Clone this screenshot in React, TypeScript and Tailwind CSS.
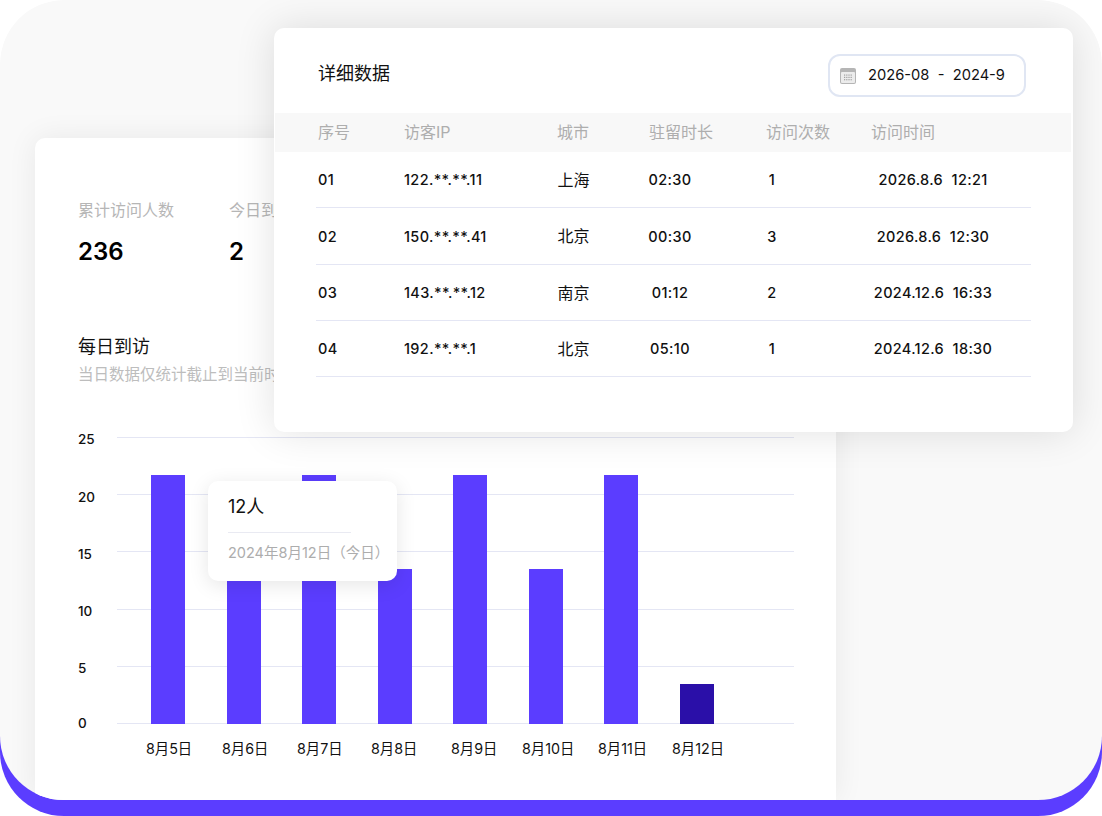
const FONT = "font-['Inter','Noto_Sans_CJK_SC',sans-serif]";

const rows = [
  ["01", "122.**.**.11", "上海", "02:30", "1", "2026.8.6  12:21"],
  ["02", "150.**.**.41", "北京", "00:30", "3", "2026.8.6  12:30"],
  ["03", "143.**.**.12", "南京", "01:12", "2", "2024.12.6  16:33"],
  ["04", "192.**.**.1", "北京", "05:10", "1", "2024.12.6  18:30"],
];
const heads = ["序号", "访客IP", "城市", "驻留时长", "访问次数", "访问时间"];
const yTicks = ["25", "20", "15", "10", "5", "0"];
const bars = [
  { label: "8月5日", h: 249 },
  { label: "8月6日", h: 200 },
  { label: "8月7日", h: 249 },
  { label: "8月8日", h: 155 },
  { label: "8月9日", h: 249 },
  { label: "8月10日", h: 155 },
  { label: "8月11日", h: 249 },
  { label: "8月12日", h: 40, today: true },
];
const rowGrid = "grid grid-cols-[86px_153.5px_80.5px_64px_140px_182px]";

function CalendarIcon() {
  return (
    <svg width="16" height="16" viewBox="0 0 16 16" className="shrink-0">
      <rect x="0" y="0" width="16" height="16" rx="2" fill="#b5b5b5" />
      <rect x="1" y="4" width="14" height="11" rx="1" fill="#ececec" />
      {[6.5, 8.8, 11.1].map((y) =>
        [4, 6.2, 8.4, 10.6].map((x) => <rect key={`${x}-${y}`} x={x} y={y} width="1.2" height="1.2" fill="#a0a0a0" />)
      )}
    </svg>
  );
}

export default function App() {
  return (
    <div className={`relative h-[816px] w-[1102px] overflow-hidden rounded-[64px] bg-[linear-gradient(transparent_50%,#5b3dff_50%)] ${FONT}`}>
      <div className="h-[800px] overflow-hidden rounded-[64px] bg-[#f9f9f9] pl-[35px] pt-[138px]">
        <div className="h-[662px] w-[801px] rounded-t-[10px] bg-white pl-[43px] pt-[61px] shadow-[0_0_30px_rgba(0,0,0,0.07)]">
          <div className="flex">
            <div className="w-[151px]">
              <div className="text-[16px] leading-[22px] text-[#b6b6b6]">累计访问人数</div>
              <div className="mt-[16px] text-[24px] leading-[30px] font-semibold text-black">236</div>
            </div>
            <div>
              <div className="text-[16px] leading-[22px] text-[#b6b6b6]">今日到访人数</div>
              <div className="mt-[16px] text-[24px] leading-[30px] font-semibold text-black">2</div>
            </div>
          </div>
          <div className="mt-[68px] text-[18px] leading-[24px] font-normal text-[#111]">每日到访</div>
          <div className="mt-[6px] text-[15.5px] leading-[20px] text-[#bdbdbd]">当日数据仅统计截止到当前时间</div>

          <div className="relative mt-[52px] h-[287px] w-[716px]">
            <div className="flex h-full flex-col justify-between">
              {yTicks.map((t) => (
                <div key={t} className="flex h-[1px] items-center">
                  <span className={`w-[39px] text-[13.5px] font-[450] text-[#111] ${t === "0" ? "pt-0" : "pt-[4px]"}`}>{t}</span>
                  <div className="h-[1px] w-[677px] bg-[#e4e6f4]" />
                </div>
              ))}
            </div>
            <div className="absolute bottom-0 left-[73px] flex items-end gap-[41.5px]">
              {bars.map((b) => (
                <div
                  key={b.label}
                  className={`w-[34px] ${b.today ? "bg-[#2a0fa8]" : "bg-[#5b3dff]"}`}
                  style={{ height: b.h }}
                />
              ))}
            </div>
            <div className="absolute left-[130px] top-[44px] h-[100px] w-[189px] rounded-[10px] bg-white px-[20px] pt-[12px] shadow-[0_4px_20px_rgba(0,0,0,0.1)]">
              <div className="text-[18px] leading-[28px] font-normal text-[#111]">12人</div>
              <div className="mt-[11px] h-[1px] w-[123px] bg-[#e9eaf2]" />
              <div className="mt-[9px] whitespace-nowrap text-[14.5px] leading-[22px] text-[#adadad]">2024年8月12日（今日）</div>
            </div>
          </div>
          <div className="mt-[14px] flex w-[716px] items-start pl-[68px] text-[14.3px] leading-[22px] text-[#111]">
            <span className="w-[76px]">8月5日</span>
            <span className="w-[75px]">8月6日</span>
            <span className="w-[74px]">8月7日</span>
            <span className="w-[80px]">8月8日</span>
            <span className="w-[71px]">8月9日</span>
            <span className="w-[76px]">8月10日</span>
            <span className="w-[74px]">8月11日</span>
            <span>8月12日</span>
          </div>
        </div>
      </div>

      <div className="absolute left-[274px] top-[28px] h-[404px] w-[799px] rounded-[10px] bg-white shadow-[0_0_40px_rgba(0,0,0,0.12)]">
        <div className="flex h-[85px] items-start justify-between pl-[44px] pr-[47px]">
          <div className="pt-[33px] text-[18px] leading-[26px] font-normal text-[#111]">详细数据</div>
          <div className="mt-[26px] flex h-[43px] w-[198px] items-center gap-[12px] rounded-[12px] border-2 border-[#e0e6f3] pl-[10px] text-[14.7px] text-[#111]">
            <CalendarIcon />
            <span className="whitespace-pre">2026-08  -  2024-9</span>
          </div>
        </div>
        <div className="ml-[1px] grid h-[39px] w-[796px] grid-cols-[86px_153px_92px_117px_105px_1fr] items-center bg-[#f8f8f8] pb-[2px] pl-[43px] text-[16px] text-[#aeaeae]">
          {heads.map((h) => (
            <span key={h}>{h}</span>
          ))}
        </div>
        <div className="ml-[42px] w-[715px]">
          {rows.map((r) => (
            <div key={r[0]} className={`${rowGrid} h-[56.3px] items-center border-b border-[#e4e6f4] pl-[2px] pt-[1px] text-[14.5px] font-[450] tracking-[0.35px] text-[#111]`}>
              <span>{r[0]}</span>
              <span>{r[1]}</span>
              <span className="text-[16px] font-normal tracking-normal">{r[2]}</span>
              <span className="text-center">{r[3]}</span>
              <span className="text-center">{r[4]}</span>
              <span className="whitespace-pre text-center">{r[5]}</span>
            </div>
          ))}
        </div>
      </div>
    </div>
  );
}
